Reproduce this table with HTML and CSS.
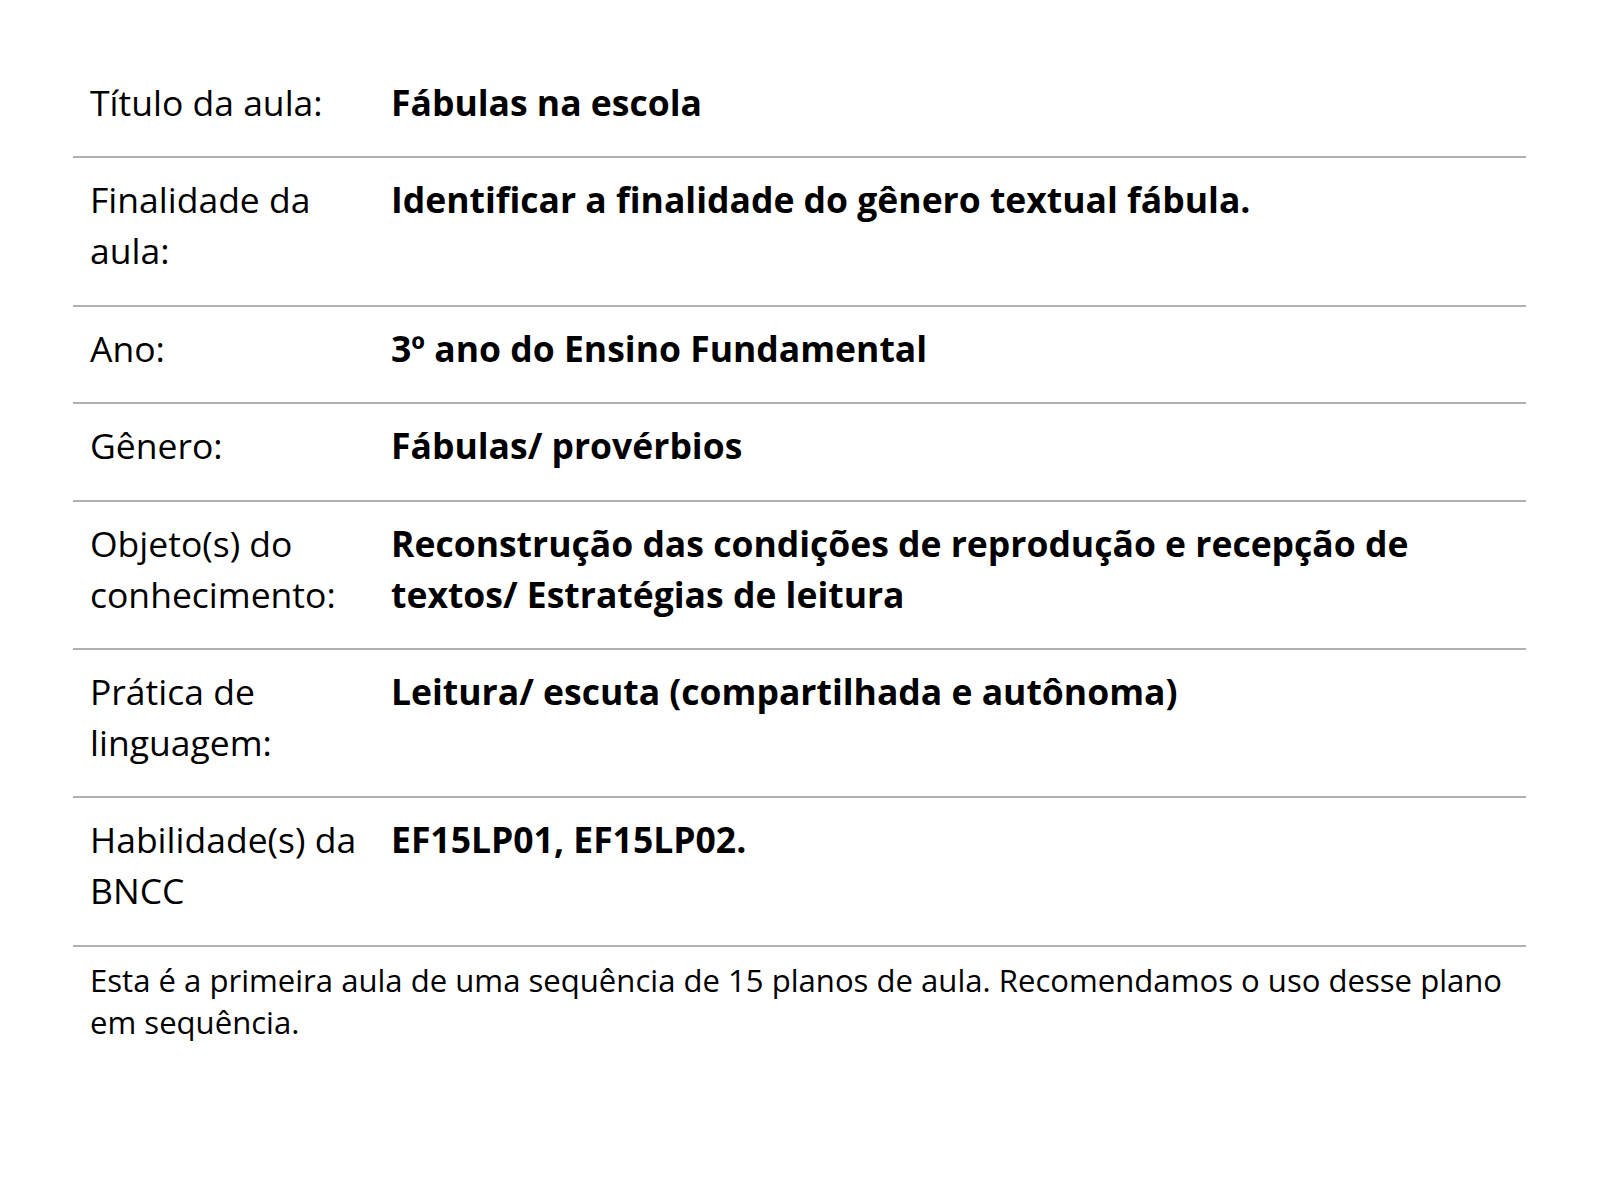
FILE: index.html
```html
<!DOCTYPE html>
<html lang="pt-BR">
<head>
<meta charset="utf-8">
<title>Plano de aula</title>
<link rel="stylesheet" href="styles.css">
</head>
<body>
<main class="page">
  <table class="plan">
    <tbody>
      <tr><th>Título da aula:</th><td>Fábulas na escola</td></tr>
      <tr><th>Finalidade da aula:</th><td>Identificar a finalidade do gênero textual fábula.</td></tr>
      <tr><th>Ano:</th><td>3º ano do Ensino Fundamental</td></tr>
      <tr><th>Gênero:</th><td>Fábulas/ provérbios</td></tr>
      <tr><th>Objeto(s) do conhecimento:</th><td>Reconstrução das condições de reprodução e recepção de textos/ Estratégias de leitura</td></tr>
      <tr><th>Prática de linguagem:</th><td>Leitura/ escuta (compartilhada e autônoma)</td></tr>
      <tr><th>Habilidade(s) da BNCC</th><td>EF15LP01, EF15LP02.</td></tr>
    </tbody>
  </table>
  <p class="note">Esta é a primeira aula de uma sequência de 15 planos de aula. Recomendamos o uso desse plano em sequência.</p>
</main>
</body>
</html>
```

FILE: styles.css
```css
html, body {
  margin: 0;
  padding: 0;
  background: #fff;
}
body {
  font-family: "Open Sans", "Noto Sans", sans-serif;
  color: #000;
}
.page {
  padding: 61px 74px 0 73px;
}
.plan {
  width: 100%;
  border-collapse: collapse;
  font-size: 35.5px;
  line-height: 51px;
}
.plan tr {
  border-bottom: 2px solid #b0b0b0;
}
.plan th {
  width: 283px;
  text-align: left;
  vertical-align: top;
  font-weight: 400;
  padding: 16px 18px 28.4px 17px;
}
.plan td {
  vertical-align: top;
  font-weight: 700;
  padding: 16px 18px 28.4px 0;
}
.note {
  margin: 12px 0 0;
  padding: 0 17px;
  font-size: 31.1px;
  line-height: 42px;
}
```
